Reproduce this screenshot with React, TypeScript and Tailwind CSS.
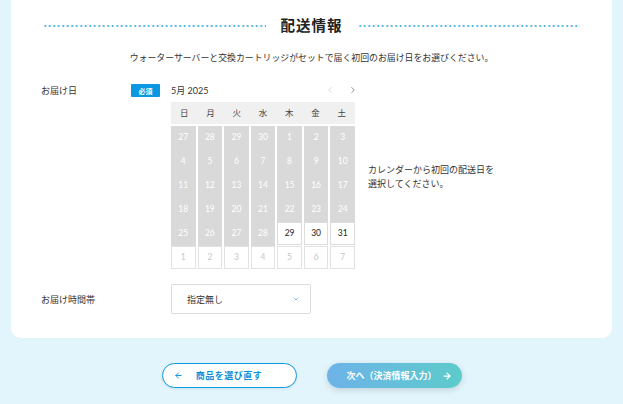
import React from 'react';
import { ArrowLeft, ArrowRight, ChevronDown, ChevronLeft, ChevronRight } from 'lucide-react';

type Day = { label: number; kind: 'past' | 'open' | 'next' };

const WEEKDAYS = ['日', '月', '火', '水', '木', '金', '土'];

// May 2025, shown from Sun Apr 27 to Sat Jun 7
const buildDays = (): Day[] => {
  const days: Day[] = [];
  [27, 28, 29, 30].forEach((d) => days.push({ label: d, kind: 'past' }));
  for (let d = 1; d <= 31; d++) days.push({ label: d, kind: d < 29 ? 'past' : 'open' });
  for (let d = 1; d <= 7; d++) days.push({ label: d, kind: 'next' });
  return days;
};

const DottedLine: React.FC = () => (
  <div className="h-[2px] flex-1 bg-[radial-gradient(circle,#2ea7e3_0.9px,transparent_1.1px)] bg-[length:4.5px_2px] bg-repeat-x" />
);

const Calendar: React.FC = () => {
  const days = buildDays();
  return (
    <div className="w-[184px]">
      <div className="flex h-[12px] items-center justify-between">
        <span className="text-[9px] text-[#333]">5月 2025</span>
        <div className="mr-[-3px] flex items-center gap-[13px]">
          <ChevronLeft size={10} strokeWidth={1.4} className="text-[#bbb]" />
          <ChevronRight size={10} strokeWidth={1.4} className="text-[#444]" />
        </div>
      </div>
      <div className="mt-[6px] grid h-[22px] grid-cols-7 items-center bg-[#f0f0f0]">
        {WEEKDAYS.map((w) => (
          <span key={w} className="text-center text-[8.5px] text-[#444]">
            {w}
          </span>
        ))}
      </div>
      <div className="mt-[2px] grid grid-cols-7 gap-x-[2px] gap-y-[1px]">
        {days.map((d, i) => {
          // past cells fill the row gap below them so the grey columns read as continuous
          const cls =
            d.kind === 'past'
              ? 'bg-[#d9d9d9] border-[#d9d9d9] text-white shadow-[0_1px_0_#d9d9d9]'
              : d.kind === 'open'
              ? 'bg-white border-[#dcdcdc] text-[#222]'
              : 'bg-white border-[#e2e2e2] text-[#c8c8c8]';
          return (
            <div
              key={i}
              className={`flex h-[23px] items-center justify-center border text-[8.5px] ${cls}`}
            >
              {d.label}
            </div>
          );
        })}
      </div>
    </div>
  );
};

const App: React.FC = () => {
  return (
    <div className="min-h-screen bg-[#e2f5fd] px-[11px] pb-[16px] font-['Lato','Noto_Sans_CJK_JP',sans-serif] text-[#333]">
      <div className="rounded-b-[10px] bg-white px-[30px] pb-[24px] pt-[16px]">
        <div className="flex h-[20px] items-center gap-[15px] px-[2px]">
          <DottedLine />
          <h2 className="text-[14.5px] font-bold tracking-[1px] text-[#222]">配送情報</h2>
          <DottedLine />
        </div>

        <p className="mt-[15px] text-center text-[8.9px] text-[#333]">
          ウォーターサーバーと交換カートリッジがセットで届く初回のお届け日をお選びください。
        </p>

        <div className="mt-[20px] flex items-start">
          <div className="flex h-[12px] w-[90px] items-center text-[9px]">お届け日</div>
          <div className="flex h-[13px] w-[29px] items-center justify-center rounded-[1px] bg-[#0a98e2] text-[7px] font-bold text-white">
            必須
          </div>
          <div className="ml-[11px] flex items-center gap-[13px]">
            <Calendar />
            <p className="text-[9px] leading-[14px] text-[#333]">
              カレンダーから初回の配送日を
              <br />
              選択してください。
            </p>
          </div>
        </div>

        <div className="mt-[15px] flex items-center">
          <div className="w-[130px] text-[9px]">お届け時間帯</div>
          <div className="flex h-[30px] w-[140px] items-center justify-between rounded-[2px] border border-[#dcdcdc] pl-[15px] pr-[10px]">
            <span className="text-[9px] text-[#333]">指定無し</span>
            <ChevronDown size={8} strokeWidth={2} className="text-[#3a9fe0]" />
          </div>
        </div>
      </div>

      <div className="mt-[25px] flex justify-center gap-[30px]">
        <button className="relative flex h-[25px] w-[135px] items-center justify-center rounded-full border border-[#0a98e2] bg-white text-[9px] font-bold tracking-[0.5px] text-[#0a8fd6] shadow-[0_1px_3px_rgba(0,0,0,0.08)]">
          <ArrowLeft size={9} strokeWidth={2.5} className="absolute left-[11px]" />
          商品を選び直す
        </button>
        <button className="relative flex h-[25px] w-[135px] items-center justify-center rounded-full bg-[linear-gradient(to_right,#6db3e8,#5dcbcb)] pr-[5px] text-[9px] font-bold text-white shadow-[0_2px_6px_rgba(0,0,0,0.15)]">
          次へ（決済情報入力）
          <ArrowRight size={10} strokeWidth={3} className="absolute right-[10px]" />
        </button>
      </div>
    </div>
  );
};

export default App;
